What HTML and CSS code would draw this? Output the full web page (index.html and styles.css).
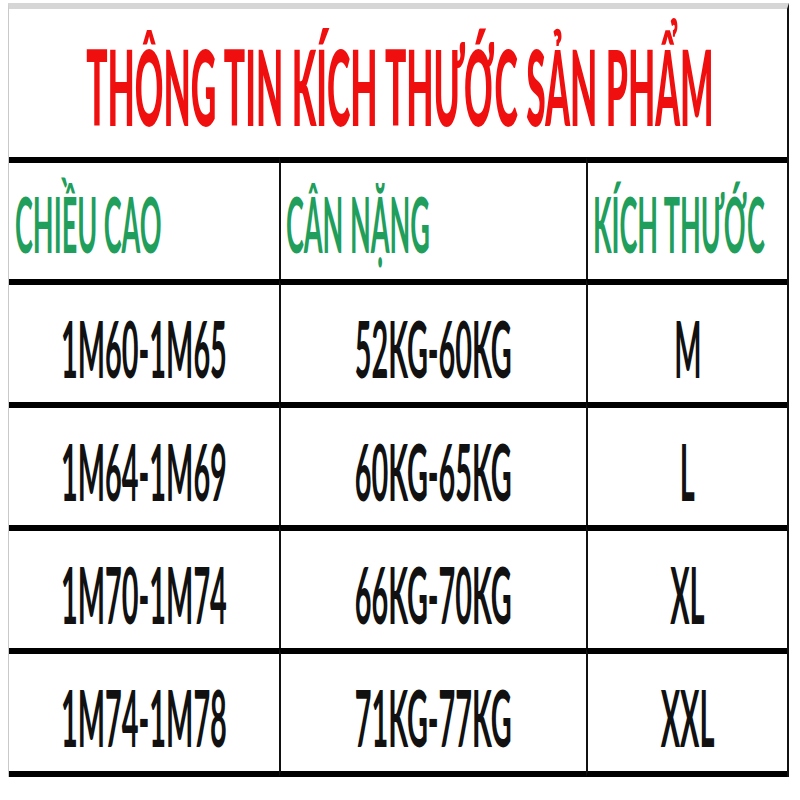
FILE: index.html
```html
<!DOCTYPE html>
<html lang="vi">
<head>
<meta charset="utf-8">
<title>Thông tin kích thước sản phẩm</title>
<link rel="stylesheet" href="styles.css">
</head>
<body>
<div class="sheet">
  <div class="title"><span class="t">THÔNG TIN KÍCH THƯỚC SẢN PHẨM</span></div>
  <div class="grid">
    <div class="cell head first"><span class="h">CHIỀU CAO</span></div>
    <div class="cell head"><span class="h">CÂN NẶNG</span></div>
    <div class="cell head"><span class="h">KÍCH THƯỚC</span></div>

    <div class="cell data first"><span class="d">1M60-1M65</span></div>
    <div class="cell data"><span class="d">52KG-60KG</span></div>
    <div class="cell data"><span class="d">M</span></div>

    <div class="cell data first"><span class="d">1M64-1M69</span></div>
    <div class="cell data"><span class="d">60KG-65KG</span></div>
    <div class="cell data"><span class="d">L</span></div>

    <div class="cell data first"><span class="d">1M70-1M74</span></div>
    <div class="cell data"><span class="d">66KG-70KG</span></div>
    <div class="cell data"><span class="d">XL</span></div>

    <div class="cell data first last"><span class="d">1M74-1M78</span></div>
    <div class="cell data last"><span class="d">71KG-77KG</span></div>
    <div class="cell data last"><span class="d">XXL</span></div>
  </div>
</div>
</body>
</html>
```

FILE: styles.css
```css
html, body {
  margin: 0;
  padding: 0;
  background: #fff;
  overflow: hidden;
}

.sheet {
  margin: 3px 0 0 8px;
  width: 778px;
  border-top: 6px solid #d6d6d6;
  border-left: 1px solid #c9c9c9;
  border-right: 2px solid #111;
  font-family: Lato, "Liberation Sans", sans-serif;
}

.title {
  height: 148px;
  box-sizing: border-box;
  padding-top: 25px;
  padding-left: 3px;
  display: flex;
  justify-content: center;
  align-items: flex-start;
  overflow: hidden;
}

.t {
  display: inline-block;
  white-space: nowrap;
  font-size: 104px;
  line-height: 1;
  font-weight: 900;
  color: #f00f0f;
  transform: scaleX(0.34);
  transform-origin: center top;
}

.grid {
  display: grid;
  grid-template-columns: 270px 307px 201px;
}

.cell {
  border-top: 6px solid #000;
  border-left: 2px solid #111;
  display: flex;
  align-items: flex-start;
  overflow: hidden;
  box-sizing: content-box;
}

.cell.first {
  border-left: 0;
}

.cell.last {
  border-bottom: 6px solid #000;
}

.head {
  height: 93px;
  padding: 23px 0 0 5px;
  justify-content: flex-start;
}

.head.first {
  padding-left: 6px;
}

.h {
  display: inline-block;
  white-space: nowrap;
  font-size: 76px;
  line-height: 1;
  font-weight: 700;
  color: #1f9e5c;
  transform: scaleX(0.355);
  transform-origin: left top;
}

.data {
  height: 93px;
  padding-top: 24px;
  justify-content: center;
}

.d {
  display: inline-block;
  white-space: nowrap;
  font-size: 78px;
  line-height: 1;
  font-weight: 700;
  color: #111;
  transform: scaleX(0.37);
  transform-origin: center top;
}
```
